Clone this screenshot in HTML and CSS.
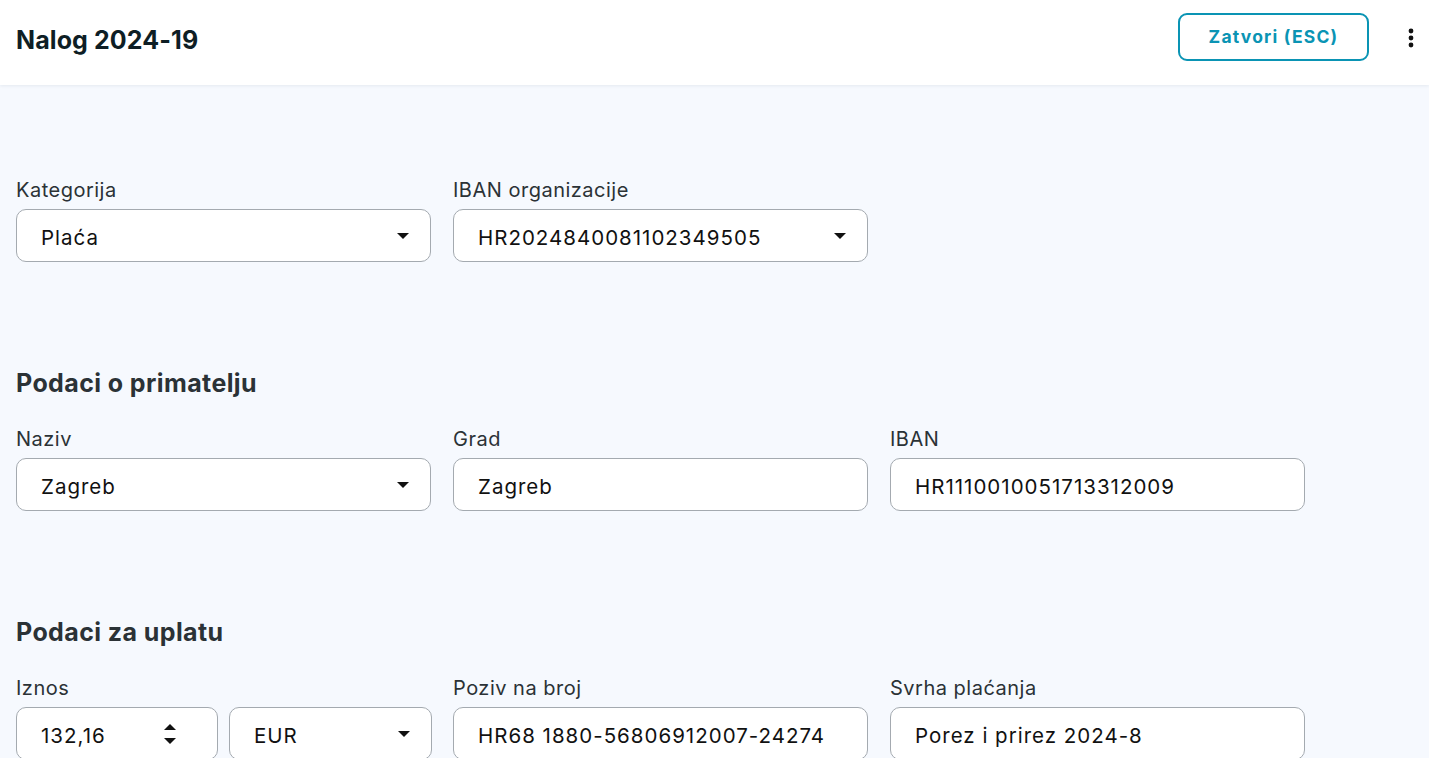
FILE: index.html
```html
<!DOCTYPE html>
<html lang="hr">
<head>
  <meta charset="UTF-8" />
  <title>Nalog 2024-19</title>
  <meta name="viewport" content="width=device-width, initial-scale=1" />
  <link rel="stylesheet" href="styles.css">
</head>
<body>

  <header class="topbar">
    <h1 class="title">Nalog 2024-19</h1>
    <div class="actions">
      <button class="close-btn">Zatvori (ESC)</button>
      <button class="menu-btn" aria-label="Više">
        <svg width="6" height="20" viewBox="0 0 6 20"><circle cx="3" cy="3" r="2.4"/><circle cx="3" cy="10" r="2.4"/><circle cx="3" cy="17" r="2.4"/></svg>
      </button>
    </div>
  </header>

  <main class="content">

    <section class="group first">
      <div class="row">
        <div class="field">
          <label>Kategorija</label>
          <div class="box select"><span>Plaća</span><i class="caret"></i></div>
        </div>
        <div class="field">
          <label>IBAN organizacije</label>
          <div class="box select"><span>HR2024840081102349505</span><i class="caret"></i></div>
        </div>
      </div>
    </section>

    <section class="group">
      <h2>Podaci o primatelju</h2>
      <div class="row">
        <div class="field">
          <label>Naziv</label>
          <div class="box select"><span>Zagreb</span><i class="caret"></i></div>
        </div>
        <div class="field">
          <label>Grad</label>
          <div class="box"><span>Zagreb</span></div>
        </div>
        <div class="field">
          <label>IBAN</label>
          <div class="box"><span>HR1110010051713312009</span></div>
        </div>
      </div>
    </section>

    <section class="group">
      <h2>Podaci za uplatu</h2>
      <div class="row">
        <div class="field">
          <label>Iznos</label>
          <div class="split">
            <div class="box number"><span>132,16</span><i class="spin"></i></div>
            <div class="box select"><span>EUR</span><i class="caret"></i></div>
          </div>
        </div>
        <div class="field">
          <label>Poziv na broj</label>
          <div class="box"><span>HR68 1880-56806912007-24274</span></div>
        </div>
        <div class="field">
          <label>Svrha plaćanja</label>
          <div class="box"><span>Porez i prirez 2024-8</span></div>
        </div>
      </div>
    </section>

  </main>

</body>
</html>
```

FILE: styles.css
```css
* {
  box-sizing: border-box;
}
body {
  margin: 0;
  font-family: Inter, "Noto Sans", sans-serif;
  background-color: #f6f9fe;
  color: #2b3236;
}
.topbar {
  height: 85px;
  background: #fff;
  display: flex;
  align-items: center;
  justify-content: space-between;
  padding: 0 15px 0 16px;
  box-shadow: 0 1px 3px rgba(30, 50, 80, 0.08);
}
.title {
  margin: -5px 0 0;
  font-size: 25px;
  font-weight: 700;
  color: #0e1e25;
  letter-spacing: 0.1px;
}
.actions {
  display: flex;
  align-items: center;
  gap: 39px;
}
.close-btn {
  width: 191px;
  height: 48px;
  margin-top: -12px;
  background: #fff;
  border: 2px solid #0a94b4;
  border-radius: 9px;
  color: #0a94b4;
  font-family: inherit;
  font-size: 17.5px;
  font-weight: 700;
  letter-spacing: 1.2px;
  cursor: pointer;
}
.menu-btn {
  background: none;
  border: none;
  padding: 0;
  margin-top: -10px;
  display: flex;
}
.menu-btn svg {
  fill: #111;
}
.content {
  padding: 93px 16px 0;
}
.group {
  margin-bottom: 105px;
}
.group h2 {
  margin: 0 0 28px;
  font-size: 25px;
  line-height: 32px;
  font-weight: 700;
  color: #2b3236;
  letter-spacing: 0.4px;
}
.row {
  display: grid;
  grid-template-columns: 415px 415px 415px;
  column-gap: 22px;
}
.field label {
  display: block;
  font-size: 20px;
  line-height: 24px;
  margin-bottom: 7px;
  color: #2b3236;
  letter-spacing: 0.5px;
}
.box {
  height: 53px;
  background: #fff;
  border: 1px solid #a4aab0;
  border-radius: 10px;
  display: flex;
  align-items: center;
  justify-content: space-between;
  padding: 0 21px 0 24px;
  font-size: 20.5px;
  color: #111;
  letter-spacing: 1px;
}
.box span {
  padding-top: 4px;
}
.caret {
  width: 0;
  height: 0;
  border-left: 6px solid transparent;
  border-right: 6px solid transparent;
  border-top: 6px solid #111;
}
.split {
  display: grid;
  grid-template-columns: 202px 203px;
  column-gap: 11px;
}
.number {
  padding-right: 41px;
}
.spin {
  position: relative;
  width: 12px;
  height: 20px;
}
.spin::before,
.spin::after {
  content: "";
  position: absolute;
  left: 0;
  border-left: 6px solid transparent;
  border-right: 6px solid transparent;
}
.spin::before {
  top: 0;
  border-bottom: 6px solid #111;
}
.spin::after {
  bottom: 0;
  border-top: 6px solid #111;
}
```
